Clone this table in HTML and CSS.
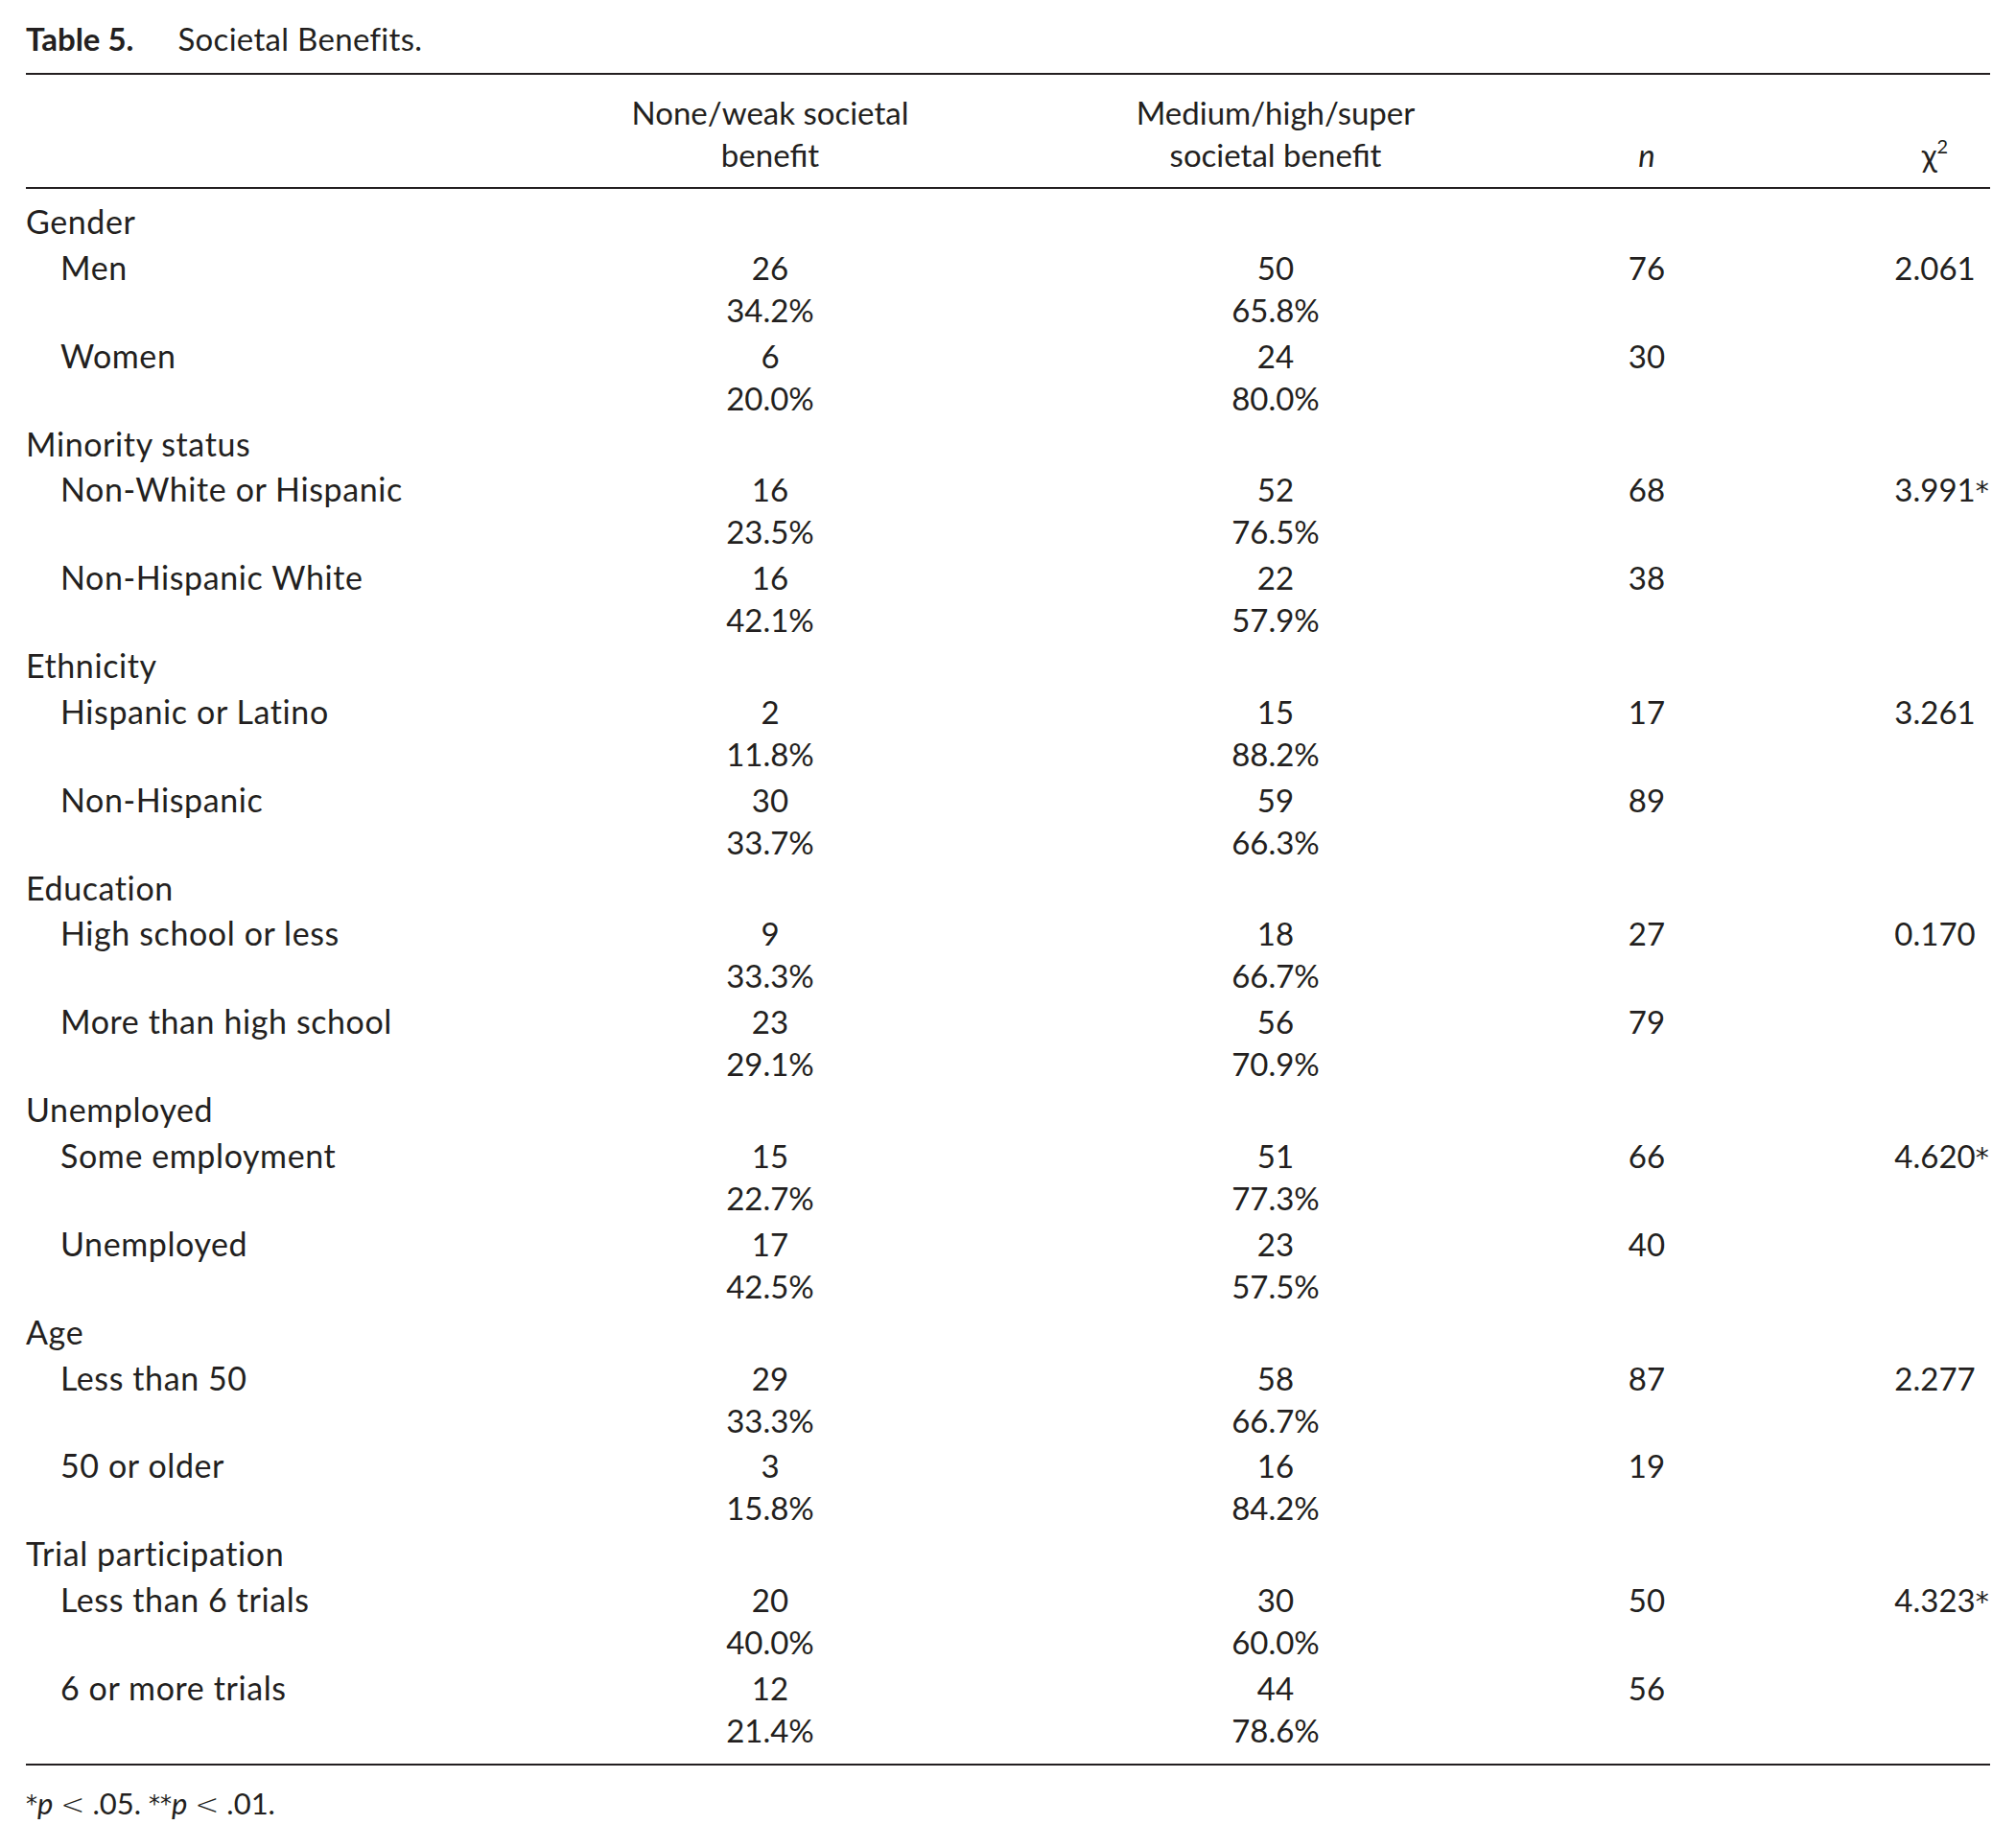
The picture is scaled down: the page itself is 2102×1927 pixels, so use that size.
FILE: index.html
```html
<!DOCTYPE html>
<html lang="en">
<head>
<meta charset="utf-8">
<title>Table 5. Societal Benefits.</title>
<link rel="stylesheet" href="styles.css">
</head>
<body>
<div class="page">
  <p class="caption"><b>Table 5.</b><span class="cap-text">Societal Benefits.</span></p>
  <table class="stats">
    <colgroup>
      <col class="c-label">
      <col class="c-a">
      <col class="c-b">
      <col class="c-n">
      <col class="c-chi">
    </colgroup>
    <thead>
      <tr>
        <th class="lbl"></th>
        <th class="num">None/weak societal<br>benefit</th>
        <th class="num">Medium/high/super<br>societal benefit</th>
        <th class="num"><i>n</i></th>
        <th class="num chi">&chi;<sup>2</sup></th>
      </tr>
    </thead>
    <tbody>
      <tr class="grp first"><td class="lbl">Gender</td><td></td><td></td><td></td><td></td></tr>
      <tr><td class="lbl sub">Men</td><td class="num">26<br>34.2%</td><td class="num">50<br>65.8%</td><td class="num">76</td><td class="num chi">2.061</td></tr>
      <tr><td class="lbl sub">Women</td><td class="num">6<br>20.0%</td><td class="num">24<br>80.0%</td><td class="num">30</td><td class="num chi"></td></tr>

      <tr class="grp"><td class="lbl">Minority status</td><td></td><td></td><td></td><td></td></tr>
      <tr><td class="lbl sub">Non-White or Hispanic</td><td class="num">16<br>23.5%</td><td class="num">52<br>76.5%</td><td class="num">68</td><td class="num chi">3.991<span class="sig">*</span></td></tr>
      <tr><td class="lbl sub">Non-Hispanic White</td><td class="num">16<br>42.1%</td><td class="num">22<br>57.9%</td><td class="num">38</td><td class="num chi"></td></tr>

      <tr class="grp"><td class="lbl">Ethnicity</td><td></td><td></td><td></td><td></td></tr>
      <tr><td class="lbl sub">Hispanic or Latino</td><td class="num">2<br>11.8%</td><td class="num">15<br>88.2%</td><td class="num">17</td><td class="num chi">3.261</td></tr>
      <tr><td class="lbl sub">Non-Hispanic</td><td class="num">30<br>33.7%</td><td class="num">59<br>66.3%</td><td class="num">89</td><td class="num chi"></td></tr>

      <tr class="grp"><td class="lbl">Education</td><td></td><td></td><td></td><td></td></tr>
      <tr><td class="lbl sub">High school or less</td><td class="num">9<br>33.3%</td><td class="num">18<br>66.7%</td><td class="num">27</td><td class="num chi">0.170</td></tr>
      <tr><td class="lbl sub">More than high school</td><td class="num">23<br>29.1%</td><td class="num">56<br>70.9%</td><td class="num">79</td><td class="num chi"></td></tr>

      <tr class="grp"><td class="lbl">Unemployed</td><td></td><td></td><td></td><td></td></tr>
      <tr><td class="lbl sub">Some employment</td><td class="num">15<br>22.7%</td><td class="num">51<br>77.3%</td><td class="num">66</td><td class="num chi">4.620<span class="sig">*</span></td></tr>
      <tr><td class="lbl sub">Unemployed</td><td class="num">17<br>42.5%</td><td class="num">23<br>57.5%</td><td class="num">40</td><td class="num chi"></td></tr>

      <tr class="grp"><td class="lbl">Age</td><td></td><td></td><td></td><td></td></tr>
      <tr><td class="lbl sub">Less than 50</td><td class="num">29<br>33.3%</td><td class="num">58<br>66.7%</td><td class="num">87</td><td class="num chi">2.277</td></tr>
      <tr><td class="lbl sub">50 or older</td><td class="num">3<br>15.8%</td><td class="num">16<br>84.2%</td><td class="num">19</td><td class="num chi"></td></tr>

      <tr class="grp"><td class="lbl">Trial participation</td><td></td><td></td><td></td><td></td></tr>
      <tr><td class="lbl sub">Less than 6 trials</td><td class="num">20<br>40.0%</td><td class="num">30<br>60.0%</td><td class="num">50</td><td class="num chi">4.323<span class="sig">*</span></td></tr>
      <tr class="last"><td class="lbl sub">6 or more trials</td><td class="num">12<br>21.4%</td><td class="num">44<br>78.6%</td><td class="num">56</td><td class="num chi"></td></tr>
    </tbody>
  </table>
  <p class="note"><span class="star">*</span><i>p</i> <span class="lt">&lt;</span> .05. <span class="star">**</span><i>p</i> <span class="lt">&lt;</span> .01.</p>
</div>
</body>
</html>
```
FILE: styles.css
```css
html, body {
  margin: 0;
  padding: 0;
  background: #ffffff;
}

body {
  font-family: "Lato", "Open Sans", sans-serif;
  color: #231f20;
}

.page {
  padding: 18px 27px 0 27px;
  width: 2048px;
}

.caption {
  margin: 0;
  font-size: 33px;
  line-height: 44px;
  height: 58px;
}

.caption b {
  font-weight: 700;
}

.cap-text {
  margin-left: 46px;
  letter-spacing: 0.3px;
}

.stats {
  width: 2048px;
  border-collapse: collapse;
  table-layout: fixed;
  font-size: 33px;
  line-height: 44px;
  border-top: 2px solid #231f20;
  border-bottom: 2px solid #231f20;
}

.c-label { width: 533px; }
.c-a { width: 486px; }
.c-b { width: 568px; }
.c-n { width: 206px; }
.c-chi { width: 255px; }

.stats th {
  font-weight: 400;
  vertical-align: bottom;
  padding: 17px 0 12px 0;
  border-bottom: 2px solid #231f20;
}

.stats td {
  vertical-align: top;
  padding: 2px 0 1.85px 0;
}

.stats td.lbl {
  font-size: 34px;
  letter-spacing: 0.6px;
}

.stats tr.first td {
  padding-top: 12px;
}

.stats tr.last td {
  padding-bottom: 13px;
}

.lbl {
  text-align: left;
}

.sub {
  padding-left: 36px !important;
}

.num {
  text-align: center;
}

.chi {
  padding-left: 140px !important;
}

.stats sup {
  font-size: 20px;
  line-height: 0;
  vertical-align: 14px;
}

.sig {
  display: inline-block;
  width: 0;
  overflow: visible;
  font-family: "DejaVu Sans", sans-serif;
  font-weight: 400;
  font-size: 28px;
  vertical-align: 1px;
}

.note {
  margin: 0;
  padding-top: 17px;
  font-size: 31px;
  line-height: 44px;
}

.star {
  font-family: "DejaVu Sans", sans-serif;
  font-size: 24px;
  vertical-align: 3px;
}

.lt {
  font-family: "DejaVu Sans", sans-serif;
  font-weight: 300;
  font-size: 30px;
}
```
